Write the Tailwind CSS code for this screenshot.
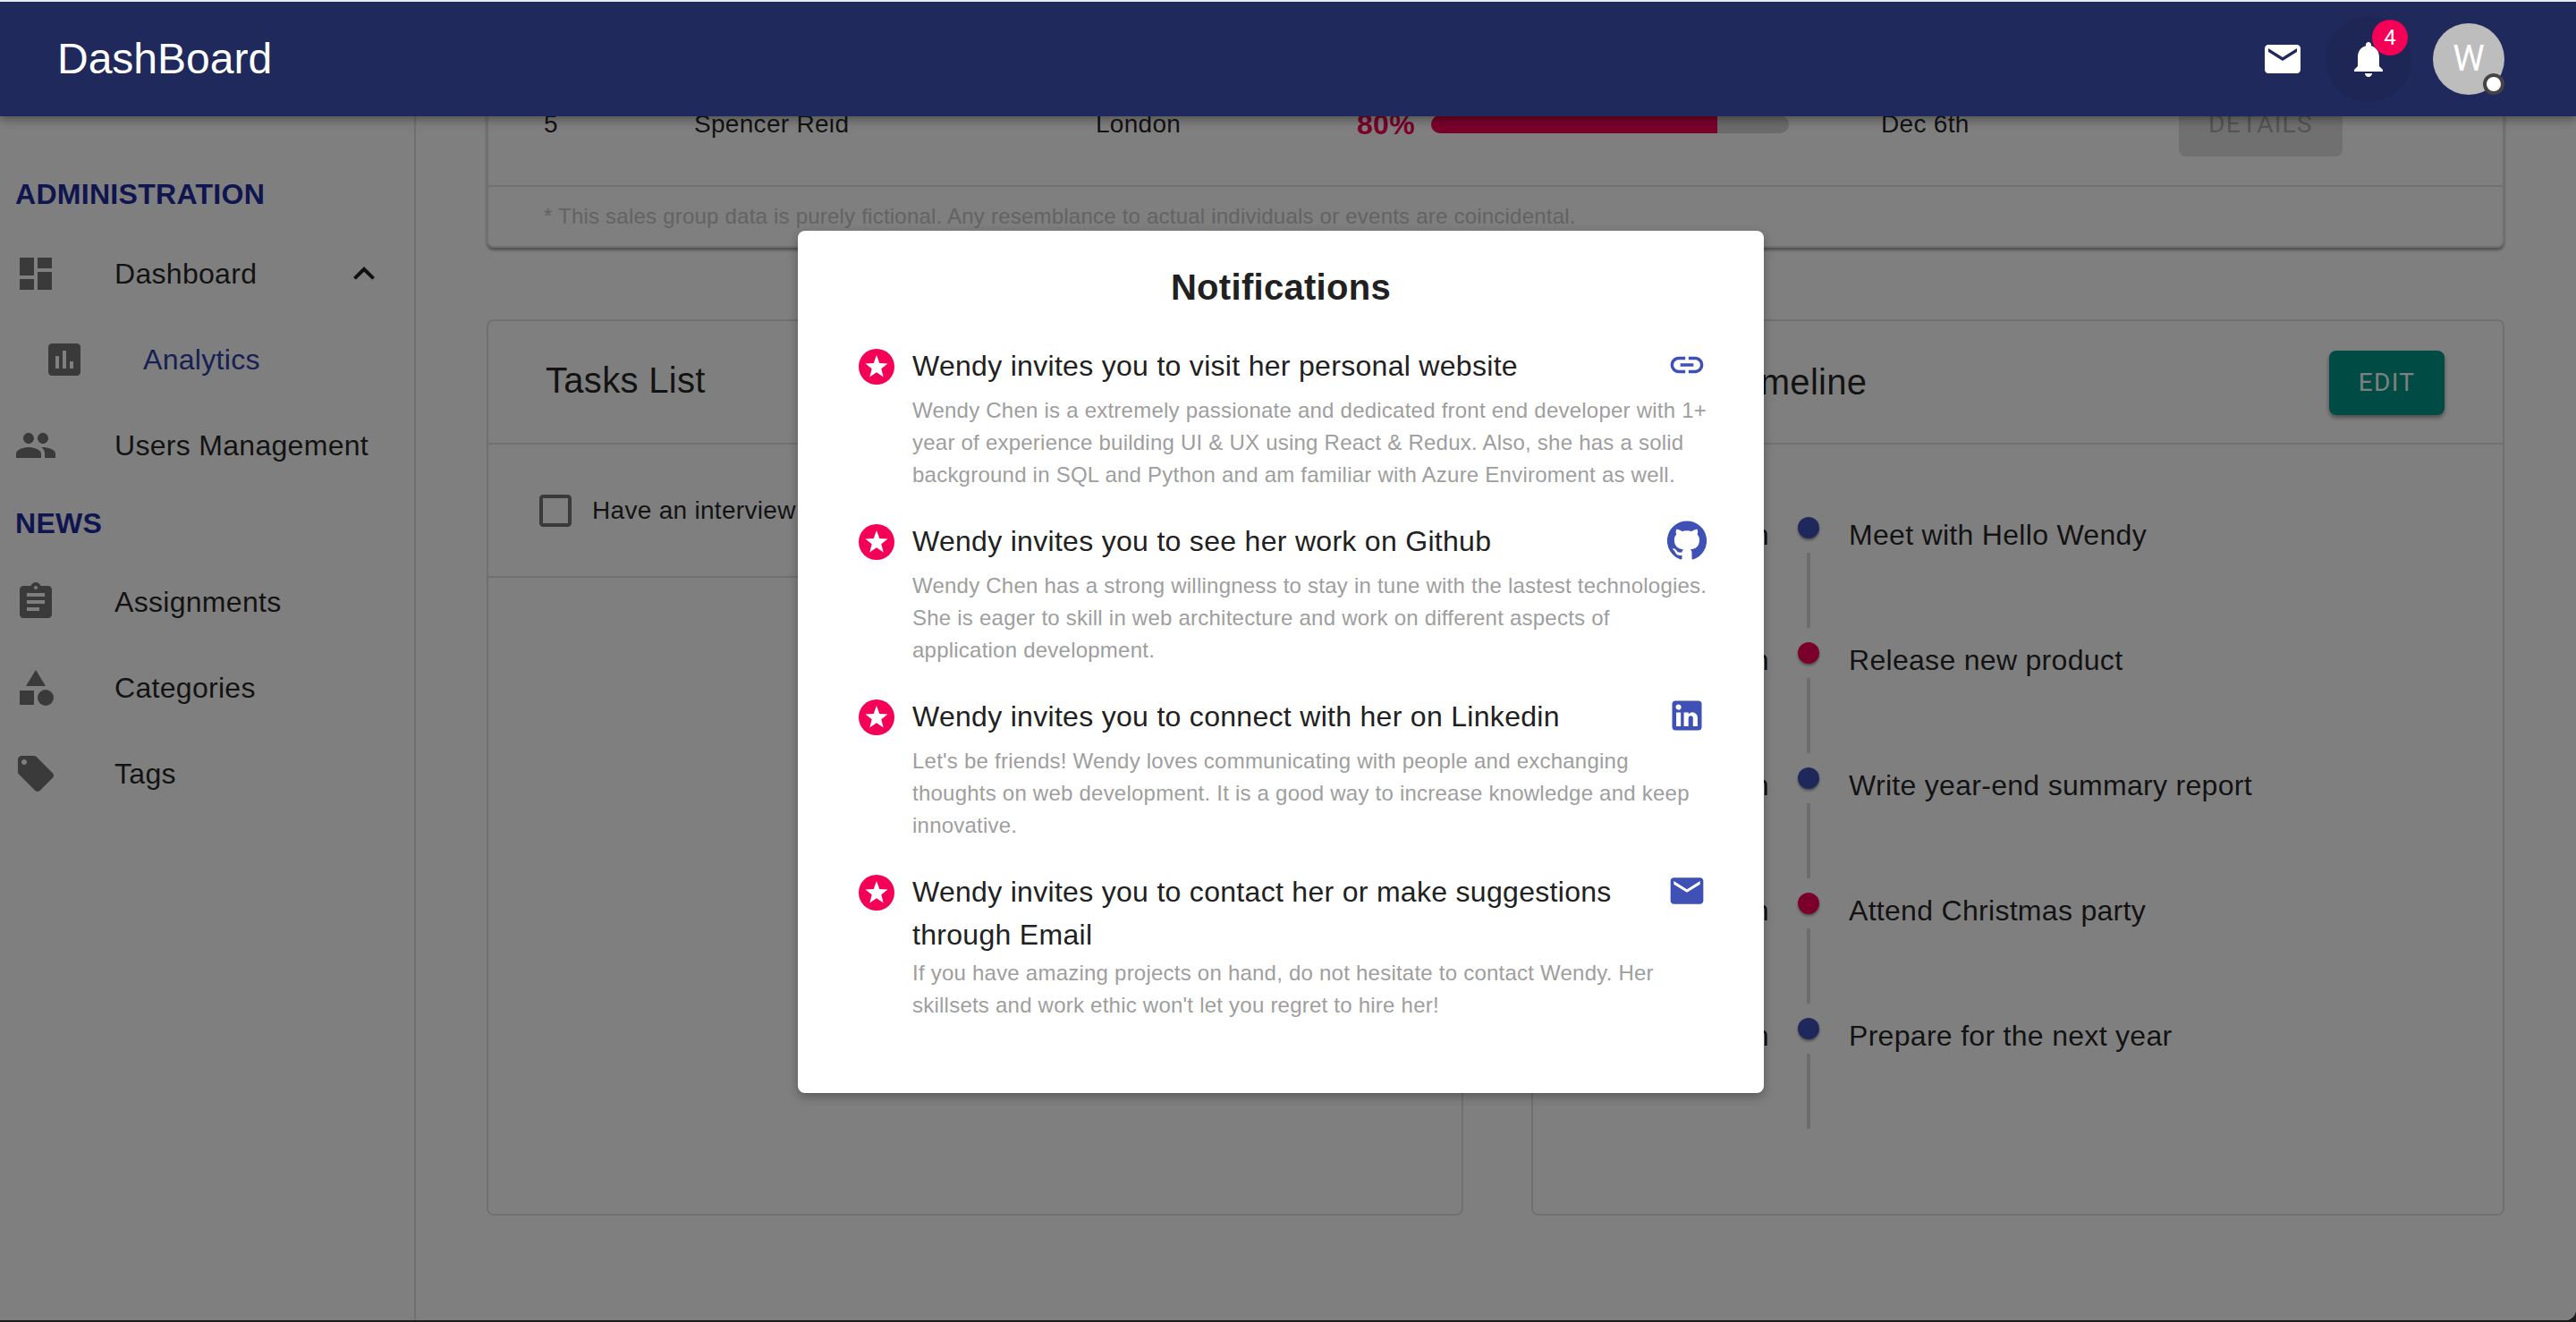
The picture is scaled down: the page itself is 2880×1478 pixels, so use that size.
<!DOCTYPE html>
<html lang="en">
<head>
    <meta charset="utf-8"/>
    <meta content="width=device-width, initial-scale=1.0" name="viewport"/>
    <title>DashBoard</title>
    <script src="https://cdn.jsdelivr.net/npm/@tailwindcss/browser@4"></script>
</head>
<body class="bg-[#1c1c1c] font-['Liberation_Sans',Arial,sans-serif] tracking-[0.3px] text-black/87">
<div class="h-[1478px] w-[2880px] overflow-hidden">
<div class="relative flex h-[1476px] flex-col overflow-hidden rounded-br-[12px] bg-white">
    <!-- top bar -->
    <header class="relative z-20 flex h-[130px] shrink-0 items-center border-t-2 border-[#e8eaf0] bg-[#20295c] pl-[64px] tracking-normal text-white shadow-[0_4px_10px_rgba(0,0,0,0.35)]">
        <span class="text-[48px] leading-none">DashBoard</span>
        <div class="ml-auto flex items-center pr-[80px]">
            <svg class="h-[48px] w-[48px] fill-white" viewBox="0 0 24 24"><path d="M20 4H4c-1.1 0-1.99.9-1.99 2L2 18c0 1.1.9 2 2 2h16c1.1 0 2-.9 2-2V6c0-1.1-.9-2-2-2zm0 4l-8 5-8-5V6l8 5 8-5v2z"/></svg>
            <div class="relative ml-[24px] flex h-[96px] w-[96px] items-center justify-center rounded-full bg-[#1e2656]">
                <svg class="h-[48px] w-[48px] fill-white" viewBox="0 0 24 24"><path d="M12 22c1.1 0 2-.9 2-2h-4c0 1.1.89 2 2 2zm6-6v-5c0-3.07-1.64-5.64-4.5-6.32V4c0-.83-.67-1.5-1.5-1.5s-1.5.67-1.5 1.5v.68C7.63 5.36 6 7.92 6 11v5l-2 2v1h16v-1l-2-2z"/></svg>
                <span class="absolute left-[52px] top-[4px] flex h-[40px] w-[40px] items-center justify-center rounded-full bg-[#f50057] font-['Roboto',sans-serif] text-[24px] text-white">4</span>
            </div>
            <div class="relative ml-[24px] flex h-[80px] w-[80px] items-center justify-center rounded-full bg-[#bdbdbd] font-['Roboto',sans-serif] text-[40px] text-white">
                W
                <span class="absolute bottom-0 right-0 h-[24px] w-[24px] rounded-full border-[4px] border-[#444444] bg-white"></span>
            </div>
        </div>
    </header>

    <div class="flex min-h-0 flex-1">
        <!-- sidebar -->
        <aside class="w-[465px] shrink-0 border-r-2 border-black/12 text-[32px]">
            <div class="flex h-[128px] items-end pb-[21px] pl-[17px] font-bold leading-[40px] text-[#1f2a9c]">ADMINISTRATION</div>
            <div class="flex h-[96px] items-center pl-[16px]">
                <svg class="h-[48px] w-[48px] fill-black/54" viewBox="0 0 24 24"><path d="M3 13h8V3H3v10zm0 8h8v-6H3v6zm10 0h8V11h-8v10zm0-18v6h8V3h-8z"/></svg>
                <span class="ml-[64px]">Dashboard</span>
                <svg class="ml-auto mr-[32px] h-[48px] w-[48px] fill-black/87" viewBox="0 0 24 24"><path d="M12 8l-6 6 1.41 1.41L12 10.83l4.59 4.58L18 14z"/></svg>
            </div>
            <div class="flex h-[96px] items-center pl-[48px]">
                <svg class="h-[48px] w-[48px] fill-black/54" viewBox="0 0 24 24"><path d="M19 3H5c-1.1 0-2 .9-2 2v14c0 1.1.9 2 2 2h14c1.1 0 2-.9 2-2V5c0-1.1-.9-2-2-2zM9 17H7v-7h2v7zm4 0h-2V7h2v10zm4 0h-2v-4h2v4z"/></svg>
                <span class="ml-[64px] text-[#2f3ea8]">Analytics</span>
            </div>
            <div class="flex h-[96px] items-center pl-[16px]">
                <svg class="h-[48px] w-[48px] fill-black/54" viewBox="0 0 24 24"><path d="M16 11c1.66 0 2.99-1.34 2.99-3S17.66 5 16 5c-1.66 0-3 1.34-3 3s1.34 3 3 3zm-8 0c1.66 0 2.99-1.34 2.99-3S9.66 5 8 5C6.34 5 5 6.34 5 8s1.34 3 3 3zm0 2c-2.33 0-7 1.17-7 3.5V19h14v-2.5c0-2.33-4.67-3.5-7-3.5zm8 0c-.29 0-.62.02-.97.05 1.16.84 1.97 1.97 1.97 3.45V19h6v-2.5c0-2.33-4.67-3.5-7-3.5z"/></svg>
                <span class="ml-[64px]">Users Management</span>
            </div>
            <div class="flex h-[79px] items-center pb-[2px] pl-[17px] font-bold text-[#1f2a9c]">NEWS</div>
            <div class="flex h-[96px] items-center pl-[16px]">
                <svg class="h-[48px] w-[48px] fill-black/54" viewBox="0 0 24 24"><path d="M19 3h-4.18C14.4 1.84 13.3 1 12 1c-1.3 0-2.4.84-2.82 2H5c-1.1 0-2 .9-2 2v14c0 1.1.9 2 2 2h14c1.1 0 2-.9 2-2V5c0-1.1-.9-2-2-2zm-7 0c.55 0 1 .45 1 1s-.45 1-1 1-1-.45-1-1 .45-1 1-1zm2 14H7v-2h7v2zm3-4H7v-2h10v2zm0-4H7V7h10v2z"/></svg>
                <span class="ml-[64px]">Assignments</span>
            </div>
            <div class="flex h-[96px] items-center pl-[16px]">
                <svg class="h-[48px] w-[48px] fill-black/54" viewBox="0 0 24 24"><path d="M12 2l-5.5 9h11z"/><circle cx="17.5" cy="17.5" r="4.5"/><path d="M3 13.5h8v8H3z"/></svg>
                <span class="ml-[64px]">Categories</span>
            </div>
            <div class="flex h-[96px] items-center pl-[16px]">
                <svg class="h-[48px] w-[48px] fill-black/54" viewBox="0 0 24 24"><path d="M21.41 11.58l-9-9C12.05 2.22 11.55 2 11 2H4c-1.1 0-2 .9-2 2v7c0 .55.22 1.05.59 1.42l9 9c.36.36.86.58 1.41.58.55 0 1.05-.22 1.41-.59l7-7c.37-.36.59-.86.59-1.41 0-.55-.23-1.06-.59-1.42zM5.5 7C4.67 7 4 6.33 4 5.5S4.67 4 5.5 4 7 4.67 7 5.5 6.33 7 5.5 7z"/></svg>
                <span class="ml-[64px]">Tags</span>
            </div>
        </aside>

        <!-- main content, scrolled so the table is cut by the top bar -->
        <main class="min-w-0 flex-1 overflow-hidden pl-[79px] pr-[80px]">
            <section class="-mt-[63px] rounded-[8px] border-2 border-t-0 border-black/12 shadow-[0_3px_3px_rgba(0,0,0,0.35)]">
                <div class="flex h-[140px] items-center pt-[3px] text-[28px]">
                    <span class="w-[230px] pl-[62px]">5</span>
                    <span class="w-[449px]">Spencer Reid</span>
                    <span class="w-[292px]">London</span>
                    <div class="flex w-[586px] items-center">
                        <span class="w-[83px] text-[32px] font-bold text-[#f50057]">80%</span>
                        <div class="h-[20px] w-[400px] overflow-hidden rounded-[10px] bg-[#d6d6d6]"><div class="h-full w-[320px] bg-[#f50057]"></div></div>
                    </div>
                    <span class="w-[333px]">Dec 6th</span>
                    <span class="flex h-[72px] w-[183px] items-center justify-center rounded-[8px] bg-black/12 font-['Roboto',sans-serif] text-[28px] tracking-[1.3px] text-black/26">DETAILS</span>
                </div>
                <div class="flex h-[68px] items-center border-t-2 border-black/12 pl-[62px] text-[24px] tracking-[0.22px] text-[#c6c6c6]">* This sales group data is purely fictional. Any resemblance to actual individuals or events are coincidental.</div>
            </section>

            <div class="mt-[80px] flex h-[1002px] gap-[76px]">
                <section class="w-[1092px] rounded-[8px] border-2 border-black/12">
                    <div class="flex h-[138px] items-center border-b-2 border-black/12 pb-[4px] pl-[64px] text-[40px] text-black/87">Tasks List</div>
                    <div class="flex h-[149px] items-center border-b-2 border-black/12 pl-[51px] text-[28px]">
                        <svg class="h-[48px] w-[48px] fill-black/54" viewBox="0 0 24 24"><path d="M19 5v14H5V5h14m0-2H5c-1.1 0-2 .9-2 2v14c0 1.1.9 2 2 2h14c1.1 0 2-.9 2-2V5c0-1.1-.9-2-2-2z"/></svg>
                        <span class="ml-[17px]">Have an interview with Hello Wendy</span>
                    </div>
                </section>
                <section class="w-[1088px] rounded-[8px] border-2 border-black/12">
                    <div class="flex h-[138px] items-center justify-between border-b-2 border-black/12 pl-[84px] pr-[65px]">
                        <span class="text-[40px] text-black/87">Project Timeline</span>
                        <span class="mt-[2px] flex h-[72px] w-[129px] items-center justify-center rounded-[8px] bg-[#009688] font-['Roboto',sans-serif] text-[28px] tracking-[1.3px] text-white shadow-[0_3px_5px_rgba(0,0,0,0.4)]">EDIT</span>
                    </div>
                    <div class="pt-[81px] text-[32px] leading-[48px]">
                        <div class="flex h-[140px]">
                            <span class="-mt-[4px] w-[264px] text-right">9:30 am</span>
                            <div class="ml-[32px] flex w-[24px] flex-col items-center">
                                <span class="h-[24px] w-[24px] rounded-full bg-[#3f51b5] shadow-[0_2px_3px_rgba(0,0,0,0.4)]"></span>
                                <span class="mt-[16px] h-[84px] w-[4px] bg-[#d8d8d8]"></span>
                            </div>
                            <span class="-mt-[4px] ml-[33px]">Meet with Hello Wendy</span>
                        </div>
                        <div class="flex h-[140px]">
                            <span class="-mt-[4px] w-[264px] text-right">10:00 am</span>
                            <div class="ml-[32px] flex w-[24px] flex-col items-center">
                                <span class="h-[24px] w-[24px] rounded-full bg-[#f50057] shadow-[0_2px_3px_rgba(0,0,0,0.4)]"></span>
                                <span class="mt-[16px] h-[84px] w-[4px] bg-[#d8d8d8]"></span>
                            </div>
                            <span class="-mt-[4px] ml-[33px]">Release new product</span>
                        </div>
                        <div class="flex h-[140px]">
                            <span class="-mt-[4px] w-[264px] text-right">11:30 am</span>
                            <div class="ml-[32px] flex w-[24px] flex-col items-center">
                                <span class="h-[24px] w-[24px] rounded-full bg-[#3f51b5] shadow-[0_2px_3px_rgba(0,0,0,0.4)]"></span>
                                <span class="mt-[16px] h-[84px] w-[4px] bg-[#d8d8d8]"></span>
                            </div>
                            <span class="-mt-[4px] ml-[33px]">Write year-end summary report</span>
                        </div>
                        <div class="flex h-[140px]">
                            <span class="-mt-[4px] w-[264px] text-right">2:00 pm</span>
                            <div class="ml-[32px] flex w-[24px] flex-col items-center">
                                <span class="h-[24px] w-[24px] rounded-full bg-[#f50057] shadow-[0_2px_3px_rgba(0,0,0,0.4)]"></span>
                                <span class="mt-[16px] h-[84px] w-[4px] bg-[#d8d8d8]"></span>
                            </div>
                            <span class="-mt-[4px] ml-[33px]">Attend Christmas party</span>
                        </div>
                        <div class="flex h-[140px]">
                            <span class="-mt-[4px] w-[264px] text-right">4:00 pm</span>
                            <div class="ml-[32px] flex w-[24px] flex-col items-center">
                                <span class="h-[24px] w-[24px] rounded-full bg-[#3f51b5] shadow-[0_2px_3px_rgba(0,0,0,0.4)]"></span>
                                <span class="mt-[16px] h-[84px] w-[4px] bg-[#d8d8d8]"></span>
                            </div>
                            <span class="-mt-[4px] ml-[33px]">Prepare for the next year</span>
                        </div>
                    </div>
                </section>
            </div>
        </main>
    </div>

    <!-- backdrop -->
    <div class="absolute inset-0 z-10 bg-black/50"></div>

    <!-- notifications dialog -->
    <div class="absolute left-[892px] top-[258px] z-30 h-[964px] w-[1080px] rounded-[8px] bg-white pl-[68px] pt-[33px] shadow-[0_4px_12px_rgba(0,0,0,0.3)]">
        <h2 class="-ml-[68px] text-center text-[40px] font-bold leading-[60px] text-[#212121]">Notifications</h2>
        <ul class="mt-[34px]">
            <li class="relative mb-[32px] flex">
                <svg class="mt-[5px] h-[40px] w-[40px] shrink-0" viewBox="0 0 40 40"><circle cx="20" cy="20" r="20" fill="#f50057"/><polygon fill="#fff" points="20,7 23.3,16 32.5,16.4 25.3,22.2 27.7,31.5 20,26.2 12.3,31.5 14.7,22.2 7.5,16.4 16.7,16"/></svg>
                <div class="ml-[20px] w-[892px]">
                    <p class="text-[32px] leading-[48px] text-[#212121]">Wendy invites you to visit her personal website</p>
                    <p class="mt-[8px] text-[24px] leading-[36px] tracking-[0.23px] text-[#9e9e9e]">Wendy Chen is a extremely passionate and dedicated front end developer with 1+ year of experience building UI &amp; UX using React &amp; Redux. Also, she has a solid background in SQL and Python and am familiar with Azure Enviroment as well.</p>
                </div>
                <svg class="absolute left-[904px] top-[1px] h-[44px] w-[44px] fill-[#3f51b5]" viewBox="0 0 24 24"><path d="M3.9 12c0-1.71 1.39-3.1 3.1-3.1h4V7H7c-2.76 0-5 2.24-5 5s2.24 5 5 5h4v-1.9H7c-1.71 0-3.1-1.39-3.1-3.1zM8 13h8v-2H8v2zm9-6h-4v1.9h4c1.71 0 3.1 1.39 3.1 3.1s-1.39 3.1-3.1 3.1h-4V17h4c2.76 0 5-2.24 5-5s-2.24-5-5-5z"/></svg>
            </li>
            <li class="relative mb-[32px] flex">
                <svg class="mt-[5px] h-[40px] w-[40px] shrink-0" viewBox="0 0 40 40"><circle cx="20" cy="20" r="20" fill="#f50057"/><polygon fill="#fff" points="20,7 23.3,16 32.5,16.4 25.3,22.2 27.7,31.5 20,26.2 12.3,31.5 14.7,22.2 7.5,16.4 16.7,16"/></svg>
                <div class="ml-[20px] w-[892px]">
                    <p class="text-[32px] leading-[48px] text-[#212121]">Wendy invites you to see her work on Github</p>
                    <p class="mt-[8px] text-[24px] leading-[36px] tracking-[0.23px] text-[#9e9e9e]">Wendy Chen has a strong willingness to stay in tune with the lastest technologies. She is eager to skill in web architecture and work on different aspects of application development.</p>
                </div>
                <svg class="absolute left-[904px] top-[1px] h-[44px] w-[44px] fill-[#3f51b5]" viewBox="0 0 24 24"><path d="M12 .3a12 12 0 0 0-3.8 23.4c.6.1.8-.3.8-.6v-2c-3.3.7-4-1.6-4-1.6-.6-1.4-1.4-1.8-1.4-1.8-1-.7.1-.7.1-.7 1.2 0 1.9 1.2 1.9 1.2 1 1.8 2.8 1.3 3.5 1 0-.8.4-1.3.7-1.6-2.7-.3-5.5-1.3-5.5-6 0-1.2.5-2.3 1.3-3.1-.2-.4-.6-1.6 0-3.2 0 0 1-.3 3.4 1.2a11.5 11.5 0 0 1 6 0c2.3-1.5 3.3-1.2 3.3-1.2.6 1.6.2 2.8 0 3.2.9.8 1.3 1.9 1.3 3.2 0 4.6-2.8 5.6-5.5 5.9.5.4.9 1 .9 2.2v3.3c0 .3.1.7.8.6A12 12 0 0 0 12 .3"/></svg>
            </li>
            <li class="relative mb-[32px] flex">
                <svg class="mt-[5px] h-[40px] w-[40px] shrink-0" viewBox="0 0 40 40"><circle cx="20" cy="20" r="20" fill="#f50057"/><polygon fill="#fff" points="20,7 23.3,16 32.5,16.4 25.3,22.2 27.7,31.5 20,26.2 12.3,31.5 14.7,22.2 7.5,16.4 16.7,16"/></svg>
                <div class="ml-[20px] w-[892px]">
                    <p class="text-[32px] leading-[48px] text-[#212121]">Wendy invites you to connect with her on Linkedin</p>
                    <p class="mt-[8px] text-[24px] leading-[36px] tracking-[0.23px] text-[#9e9e9e]">Let's be friends! Wendy loves communicating with people and exchanging thoughts on web development. It is a good way to increase knowledge and keep innovative.</p>
                </div>
                <svg class="absolute left-[904px] top-[1px] h-[44px] w-[44px] fill-[#3f51b5]" viewBox="0 0 24 24"><path d="M19 3a2 2 0 0 1 2 2v14a2 2 0 0 1-2 2H5a2 2 0 0 1-2-2V5a2 2 0 0 1 2-2h14m-.5 15.5v-5.3a3.26 3.26 0 0 0-3.26-3.26c-.85 0-1.84.52-2.32 1.3v-1.11h-2.79v8.37h2.79v-4.93c0-.77.62-1.4 1.39-1.4a1.4 1.4 0 0 1 1.4 1.4v4.93h2.79M6.88 8.56a1.68 1.68 0 0 0 1.68-1.68c0-.93-.75-1.69-1.68-1.69a1.69 1.69 0 0 0-1.69 1.69c0 .93.76 1.68 1.69 1.68m1.39 9.94v-8.37H5.5v8.37h2.77z"/></svg>
            </li>
            <li class="relative flex">
                <svg class="mt-[5px] h-[40px] w-[40px] shrink-0" viewBox="0 0 40 40"><circle cx="20" cy="20" r="20" fill="#f50057"/><polygon fill="#fff" points="20,7 23.3,16 32.5,16.4 25.3,22.2 27.7,31.5 20,26.2 12.3,31.5 14.7,22.2 7.5,16.4 16.7,16"/></svg>
                <div class="ml-[20px] w-[892px]">
                    <p class="text-[32px] leading-[48px] text-[#212121]">Wendy invites you to contact her or make suggestions through Email</p>
                    <p class="mt-[1px] text-[24px] leading-[36px] tracking-[0.23px] text-[#9e9e9e]">If you have amazing projects on hand, do not hesitate to contact Wendy. Her skillsets and work ethic won't let you regret to hire her!</p>
                </div>
                <svg class="absolute left-[904px] top-[1px] h-[44px] w-[44px] fill-[#3f51b5]" viewBox="0 0 24 24"><path d="M20 4H4c-1.1 0-1.99.9-1.99 2L2 18c0 1.1.9 2 2 2h16c1.1 0 2-.9 2-2V6c0-1.1-.9-2-2-2zm0 4l-8 5-8-5V6l8 5 8-5v2z"/></svg>
            </li>
        </ul>
    </div>
</div>
</div>
</body>
</html>
